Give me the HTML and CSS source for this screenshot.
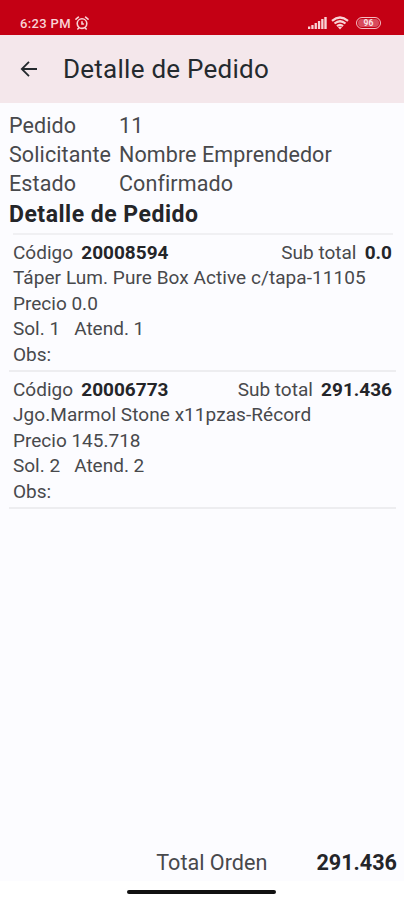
FILE: index.html
```html
<!DOCTYPE html>
<html lang="es">
<head>
<meta charset="utf-8">
<title>Detalle de Pedido</title>
<link rel="stylesheet" href="styles.css">
</head>
<body>
<div class="status">
  <span class="time">6:23 PM</span>
  <svg class="alarm" width="14" height="14" viewBox="0 0 14 14" fill="none" stroke="currentColor" stroke-width="1.6" stroke-linecap="round"><circle cx="7" cy="7.6" r="4.8"/><path d="M1 3.2 3.4 1.2M13 3.2 10.6 1.2M7 5.8V8h1.4M3.6 12.2l-.8.8M10.4 12.2l.8.8"/></svg>
  <svg class="signal" width="19" height="12" viewBox="0 0 19 12" fill="currentColor"><path d="M0 9.5h2.3V12H0zM3.3 8h2.3v4H3.3zM6.6 6h2.3v6H6.6zM9.9 4h2.3v8H9.9zM13.2 2h2.3v10h-2.3zM16.3 0h2.4v12h-2.4z"/></svg>
  <svg class="wifi" width="18" height="14" viewBox="0 0 18 14" fill="none" stroke="currentColor" stroke-width="2.2"><path d="M1 4.8Q9-1.8 17 4.8M3.5 7.5Q9 3 14.5 7.5M6 10.2Q9 7.6 12 10.2"/><path d="M7 11.2Q9 9.6 11 11.2L9 13.6z" fill="currentColor" stroke="none"/></svg>
  <span class="battery"><span class="level">96</span></span>
</div>
<header class="bar">
  <svg width="18" height="18" viewBox="0 0 18 18" fill="none" stroke="currentColor" stroke-width="1.8"><path d="M17 9H2M9 1.8 1.8 9 9 16.2"/></svg>
  <h1>Detalle de Pedido</h1>
</header>
<main>
  <dl class="info">
    <dt>Pedido</dt><dd>11</dd>
    <dt>Solicitante</dt><dd>Nombre Emprendedor</dd>
    <dt>Estado</dt><dd>Confirmado</dd>
  </dl>
  <h2>Detalle de Pedido</h2>
  <section class="item first">
    <div class="row"><span>Código <b>20008594</b></span><span>Sub total <b>0.0</b></span></div>
    <div class="row name"><span>Táper Lum. Pure Box Active c/tapa-11105</span></div>
    <div class="row"><span>Precio 0.0</span></div>
    <div class="row counts"><span>Sol. 1</span><span>Atend. 1</span></div>
    <div class="row"><span>Obs:</span></div>
  </section>
  <section class="item">
    <div class="row"><span>Código <b>20006773</b></span><span>Sub total <b>291.436</b></span></div>
    <div class="row name"><span>Jgo.Marmol Stone x11pzas-Récord</span></div>
    <div class="row"><span>Precio 145.718</span></div>
    <div class="row counts"><span>Sol. 2</span><span>Atend. 2</span></div>
    <div class="row"><span>Obs:</span></div>
  </section>
</main>
<footer class="total"><span>Total Orden</span><b>291.436</b></footer>
<div class="nav"><div class="handle"></div></div>
</body>
</html>
```
FILE: styles.css
```css
* { box-sizing: border-box; margin: 0; }
body { height: 900px; display: flex; flex-direction: column; background: #fcfcff; color: #48494c; font-family: Roboto, sans-serif; overflow: hidden; }
b { font-weight: 700; color: #242529; }
.status { height: 35px; flex: none; background: #c40014; color: #f9d3d6; display: flex; align-items: center; padding: 11px 23px 0 20px; }
.time { font-size: 13px; font-weight: 500; letter-spacing: .35px; width: 55px; white-space: nowrap; }
.signal { margin-left: auto; }
.wifi { margin-left: 4px; }
.battery { margin-left: 7px; width: 25px; height: 12px; border: 1.5px solid #f4bcc2; border-radius: 6px; padding: 1px; display: flex; }
.level { flex: 1; border-radius: 4px; background: #d84a5c; font-size: 8.5px; line-height: 8px; font-weight: 700; text-align: center; color: #fbe3e6; }
.bar { height: 68px; flex: none; background: #f4e7eb; display: flex; align-items: center; padding: 0 20px 1px; gap: 25px; color: #242a2e; }
h1 { font-size: 26px; font-weight: 400; line-height: 32px; letter-spacing: .25px; padding-top: 1px; white-space: nowrap; }
main { flex: 1; padding: 8px 8px 0 9px; }
.info { display: grid; grid-template-columns: 110px 1fr; font-size: 21.5px; line-height: 29.2px; letter-spacing: .1px; white-space: nowrap; }
.info dd { margin: 0; }
h2 { font-size: 23px; line-height: 31.3px; font-weight: 700; color: #242529; letter-spacing: .5px; }
.item { height: 137px; padding: 5px 4px 0; border-bottom: 2px solid #ededf0; font-size: 19px; line-height: 25.5px; }
.item.first { height: 142px; padding-top: 10px; background: linear-gradient(#f0f0f3, #f0f0f3) 4px 3px / 380px 2px no-repeat; }
.row { display: flex; justify-content: space-between; white-space: nowrap; }
.row.name { letter-spacing: .06px; }
.row b { margin-left: 3.5px; }
.row.counts { justify-content: flex-start; gap: 14px; }
.total { height: 40px; display: flex; justify-content: flex-end; align-items: center; gap: 49px; padding: 3px 7px 0 0; font-size: 21.6px; }
.nav { height: 19px; background: #fff; display: flex; justify-content: center; padding: 9px 2px 0 0; }
.handle { width: 149px; height: 4px; border-radius: 2px; background: #111; }
```
